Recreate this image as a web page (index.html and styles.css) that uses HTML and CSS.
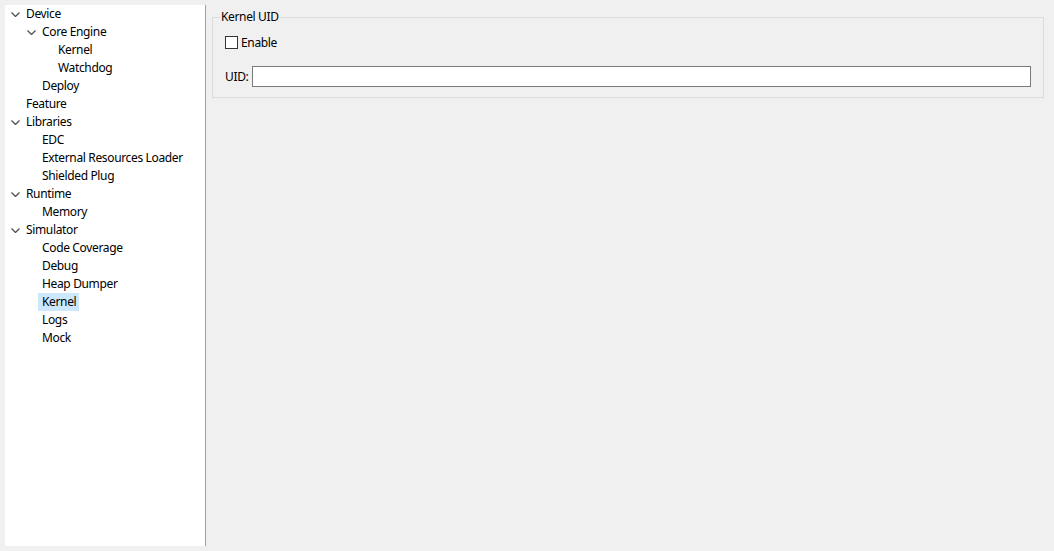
FILE: index.html
```html
<!DOCTYPE html>
<html>
<head>
<meta charset="utf-8">
<link rel="stylesheet" href="styles.css">
</head>
<body>
<div class="app">
  <div class="tree">
    <div class="row l0"><svg class="chev" viewBox="0 0 9 5"><polyline points="0.5,0.5 4.5,4.5 8.5,0.5"/></svg><span class="lbl">Device</span></div>
    <div class="row l1"><svg class="chev" viewBox="0 0 9 5"><polyline points="0.5,0.5 4.5,4.5 8.5,0.5"/></svg><span class="lbl">Core Engine</span></div>
    <div class="row l2"><span class="sp"></span><span class="lbl">Kernel</span></div>
    <div class="row l2"><span class="sp"></span><span class="lbl">Watchdog</span></div>
    <div class="row l1"><span class="sp"></span><span class="lbl">Deploy</span></div>
    <div class="row l0"><span class="sp"></span><span class="lbl">Feature</span></div>
    <div class="row l0"><svg class="chev" viewBox="0 0 9 5"><polyline points="0.5,0.5 4.5,4.5 8.5,0.5"/></svg><span class="lbl">Libraries</span></div>
    <div class="row l1"><span class="sp"></span><span class="lbl">EDC</span></div>
    <div class="row l1"><span class="sp"></span><span class="lbl">External Resources Loader</span></div>
    <div class="row l1"><span class="sp"></span><span class="lbl">Shielded Plug</span></div>
    <div class="row l0"><svg class="chev" viewBox="0 0 9 5"><polyline points="0.5,0.5 4.5,4.5 8.5,0.5"/></svg><span class="lbl">Runtime</span></div>
    <div class="row l1"><span class="sp"></span><span class="lbl">Memory</span></div>
    <div class="row l0"><svg class="chev" viewBox="0 0 9 5"><polyline points="0.5,0.5 4.5,4.5 8.5,0.5"/></svg><span class="lbl">Simulator</span></div>
    <div class="row l1"><span class="sp"></span><span class="lbl">Code Coverage</span></div>
    <div class="row l1"><span class="sp"></span><span class="lbl">Debug</span></div>
    <div class="row l1"><span class="sp"></span><span class="lbl">Heap Dumper</span></div>
    <div class="row l1"><span class="sp"></span><span class="lbl selected">Kernel</span></div>
    <div class="row l1"><span class="sp"></span><span class="lbl">Logs</span></div>
    <div class="row l1"><span class="sp"></span><span class="lbl">Mock</span></div>
  </div>
  <div class="content">
    <fieldset class="group">
      <legend class="legend">Kernel UID</legend>
      <label class="check-row"><input type="checkbox" class="check"><span>Enable</span></label>
      <div class="field-row"><span class="field-label">UID:</span><input type="text" class="text-input"></div>
    </fieldset>
  </div>
</div>
</body>
</html>
```
FILE: styles.css
```css
html, body {
  margin: 0;
  padding: 0;
}
body {
  background: #f0f0f0;
  font-family: "Noto Sans", "Open Sans", sans-serif;
  font-size: 12px;
  letter-spacing: -0.35px;
  color: #000;
}
.app {
  display: flex;
  height: 551px;
  box-sizing: border-box;
  padding: 5px 10px 5px 5px;
}
.tree {
  width: 200px;
  flex: none;
  background: #fff;
  border-right: 1px solid #a0a0a0;
}
.row {
  height: 18px;
  display: flex;
  align-items: center;
  white-space: nowrap;
}
.row.l0 { padding-left: 6px; }
.row.l1 { padding-left: 22px; }
.row.l2 { padding-left: 38px; }
.chev {
  width: 9px;
  height: 5px;
  flex: none;
  margin-right: 6px;
  fill: none;
  stroke: #505050;
  stroke-width: 1.3;
}
.sp {
  width: 9px;
  flex: none;
  margin-right: 6px;
}
.lbl {
  line-height: 18px;
}
.selected {
  background: #cce8ff;
  margin-left: -4px;
  padding: 0 3px 0 4px;
}
.content {
  flex: 1;
  padding-left: 6px;
  padding-top: 4px;
}
.group {
  margin: 0;
  border: 1px solid #dcdcdc;
  padding: 9px 12px 10px 12px;
}
.legend {
  padding: 0 1px;
  margin-left: -5px;
  line-height: 16px;
}
.check-row {
  display: flex;
  align-items: center;
  height: 16px;
}
.check {
  appearance: none;
  -webkit-appearance: none;
  width: 13px;
  height: 13px;
  margin: 0 3px 0 0;
  border: 1px solid #333;
  background: #fff;
  box-sizing: border-box;
}
.field-row {
  display: flex;
  align-items: center;
  margin-top: 16px;
  gap: 4px;
}
.text-input {
  flex: 1;
  height: 21px;
  box-sizing: border-box;
  border: 1px solid #7a7a7a;
  margin: 0;
  padding: 0 3px;
  background: #fff;
  font: inherit;
}
```
